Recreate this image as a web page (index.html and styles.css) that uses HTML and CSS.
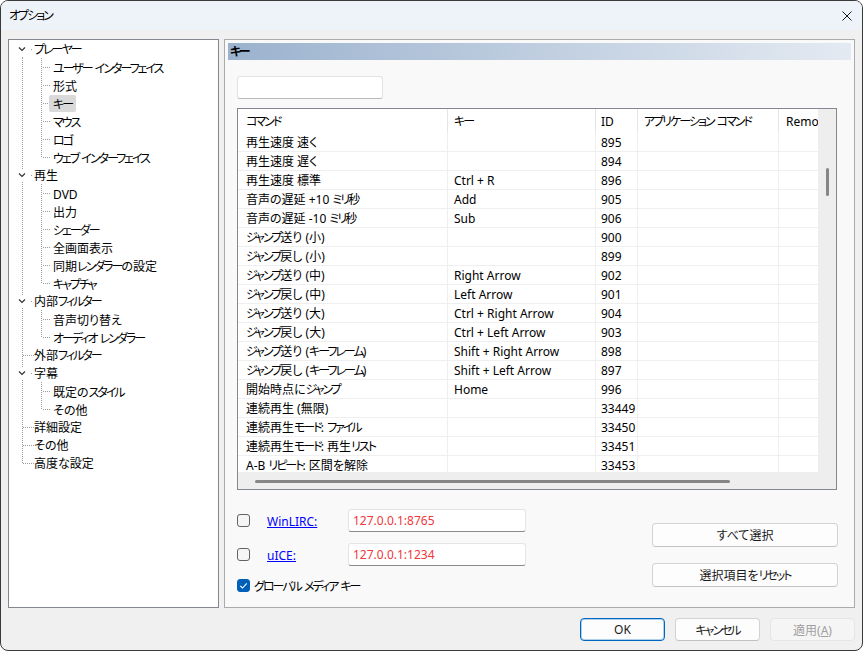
FILE: index.html
```html
<!DOCTYPE html>
<html lang="ja">
<head>
<meta charset="utf-8">
<title>オプション</title>
<link rel="stylesheet" href="styles.css">
</head>
<body>
<div class="window">
  <div class="titlebar">
    <span class="title"><span class="k">オプション</span></span>
    <span class="close"><svg width="10" height="10" viewBox="0 0 10 10"><path d="M0.5 0.5L9.5 9.5M9.5 0.5L0.5 9.5" stroke="#1b1b1b" stroke-width="1" fill="none"/></svg></span>
  </div>
  <div class="main">
    <div class="tree">
      <div class="row top first exp"><span class="exp-btn"><svg width="8" height="6" viewBox="0 0 8 6"><path d="M1 1.5L4 4.5L7 1.5" stroke="#333" stroke-width="1.2" fill="none"/></svg></span><span class="label"><span class="k">プレーヤー</span></span></div>
      <div class="row child"><span class="clabel"><span class="k">ユーザー</span> <span class="k">インターフェイス</span></span></div>
      <div class="row child"><span class="clabel">形式</span></div>
      <div class="row child"><span class="clabel selected"><span class="k">キー</span></span></div>
      <div class="row child"><span class="clabel"><span class="k">マウス</span></span></div>
      <div class="row child"><span class="clabel"><span class="k">ロゴ</span></span></div>
      <div class="row child last"><span class="clabel"><span class="k">ウェブ</span> <span class="k">インターフェイス</span></span></div>
      <div class="row top exp"><span class="exp-btn"><svg width="8" height="6" viewBox="0 0 8 6"><path d="M1 1.5L4 4.5L7 1.5" stroke="#333" stroke-width="1.2" fill="none"/></svg></span><span class="label">再生</span></div>
      <div class="row child"><span class="clabel">DVD</span></div>
      <div class="row child"><span class="clabel">出力</span></div>
      <div class="row child"><span class="clabel"><span class="k">シェーダー</span></span></div>
      <div class="row child"><span class="clabel">全画面表示</span></div>
      <div class="row child"><span class="clabel">同期<span class="k">レンダラー</span>の設定</span></div>
      <div class="row child last"><span class="clabel"><span class="k">キャプチャ</span></span></div>
      <div class="row top exp"><span class="exp-btn"><svg width="8" height="6" viewBox="0 0 8 6"><path d="M1 1.5L4 4.5L7 1.5" stroke="#333" stroke-width="1.2" fill="none"/></svg></span><span class="label">内部<span class="k">フィルター</span></span></div>
      <div class="row child"><span class="clabel">音声切り替え</span></div>
      <div class="row child last"><span class="clabel"><span class="k">オーディオ</span> <span class="k">レンダラー</span></span></div>
      <div class="row top"><span class="label plain">外部<span class="k">フィルター</span></span></div>
      <div class="row top exp"><span class="exp-btn"><svg width="8" height="6" viewBox="0 0 8 6"><path d="M1 1.5L4 4.5L7 1.5" stroke="#333" stroke-width="1.2" fill="none"/></svg></span><span class="label">字幕</span></div>
      <div class="row child"><span class="clabel">既定の<span class="k">スタイル</span></span></div>
      <div class="row child last"><span class="clabel">その他</span></div>
      <div class="row top"><span class="label plain">詳細設定</span></div>
      <div class="row top"><span class="label plain">その他</span></div>
      <div class="row top last"><span class="label plain">高度な設定</span></div>
    </div>
    <div class="page">
      <div class="page-header"><span class="k">キー</span></div>
      <div class="page-body">
        <div class="search"></div>
        <div class="list">
          <div class="viewport">
            <div class="thead">
              <div class="c c1"><span class="k">コマンド</span></div><div class="c"><span class="k">キー</span></div><div class="c c3">ID</div><div class="c"><span class="k">アプリケーション</span> <span class="k">コマンド</span></div><div class="c c5">Remote</div>
            </div>
            <div class="trow"><div class="c c1">再生速度 速く</div><div class="c"></div><div class="c c3">895</div><div class="c"></div><div class="c c5"></div></div>
            <div class="trow"><div class="c c1">再生速度 遅く</div><div class="c"></div><div class="c c3">894</div><div class="c"></div><div class="c c5"></div></div>
            <div class="trow"><div class="c c1">再生速度 標準</div><div class="c">Ctrl + R</div><div class="c c3">896</div><div class="c"></div><div class="c c5"></div></div>
            <div class="trow"><div class="c c1">音声の遅延 +10 <span class="k">ミリ</span>秒</div><div class="c">Add</div><div class="c c3">905</div><div class="c"></div><div class="c c5"></div></div>
            <div class="trow"><div class="c c1">音声の遅延 -10 <span class="k">ミリ</span>秒</div><div class="c">Sub</div><div class="c c3">906</div><div class="c"></div><div class="c c5"></div></div>
            <div class="trow"><div class="c c1"><span class="k">ジャンプ</span>送り (小)</div><div class="c"></div><div class="c c3">900</div><div class="c"></div><div class="c c5"></div></div>
            <div class="trow"><div class="c c1"><span class="k">ジャンプ</span>戻し (小)</div><div class="c"></div><div class="c c3">899</div><div class="c"></div><div class="c c5"></div></div>
            <div class="trow"><div class="c c1"><span class="k">ジャンプ</span>送り (中)</div><div class="c">Right Arrow</div><div class="c c3">902</div><div class="c"></div><div class="c c5"></div></div>
            <div class="trow"><div class="c c1"><span class="k">ジャンプ</span>戻し (中)</div><div class="c">Left Arrow</div><div class="c c3">901</div><div class="c"></div><div class="c c5"></div></div>
            <div class="trow"><div class="c c1"><span class="k">ジャンプ</span>送り (大)</div><div class="c">Ctrl + Right Arrow</div><div class="c c3">904</div><div class="c"></div><div class="c c5"></div></div>
            <div class="trow"><div class="c c1"><span class="k">ジャンプ</span>戻し (大)</div><div class="c">Ctrl + Left Arrow</div><div class="c c3">903</div><div class="c"></div><div class="c c5"></div></div>
            <div class="trow"><div class="c c1"><span class="k">ジャンプ</span>送り (<span class="k">キーフレーム</span>)</div><div class="c">Shift + Right Arrow</div><div class="c c3">898</div><div class="c"></div><div class="c c5"></div></div>
            <div class="trow"><div class="c c1"><span class="k">ジャンプ</span>戻し (<span class="k">キーフレーム</span>)</div><div class="c">Shift + Left Arrow</div><div class="c c3">897</div><div class="c"></div><div class="c c5"></div></div>
            <div class="trow"><div class="c c1">開始時点に<span class="k">ジャンプ</span></div><div class="c">Home</div><div class="c c3">996</div><div class="c"></div><div class="c c5"></div></div>
            <div class="trow"><div class="c c1">連続再生 (無限)</div><div class="c"></div><div class="c c3">33449</div><div class="c"></div><div class="c c5"></div></div>
            <div class="trow"><div class="c c1">連続再生<span class="k">モード</span>: <span class="k">ファイル</span></div><div class="c"></div><div class="c c3">33450</div><div class="c"></div><div class="c c5"></div></div>
            <div class="trow"><div class="c c1">連続再生<span class="k">モード</span>: 再生<span class="k">リスト</span></div><div class="c"></div><div class="c c3">33451</div><div class="c"></div><div class="c c5"></div></div>
            <div class="trow"><div class="c c1">A-B <span class="k">リピート</span>: 区間を解除</div><div class="c"></div><div class="c c3">33453</div><div class="c"></div><div class="c c5"></div></div>
          </div>
          <div class="vscroll"><div class="vthumb"></div></div>
          <div class="hscroll"><div class="hthumb"></div></div>
          <div class="corner"></div>
        </div>
        <div class="bottom">
          <div class="opts">
            <div class="opt-row">
              <span class="cb"></span>
              <span class="link-cell"><a class="link" href="#">WinLIRC:</a></span>
              <div class="addr">127.0.0.1:8765</div>
            </div>
            <div class="opt-row second">
              <span class="cb"></span>
              <span class="link-cell"><a class="link" href="#">uICE:</a></span>
              <div class="addr">127.0.0.1:1234</div>
            </div>
            <div class="opt-row third">
              <span class="cb checked"><svg width="13" height="13" viewBox="0 0 13 13"><path d="M3.2 6.8L5.5 9L9.8 4.3" stroke="#fff" stroke-width="1.1" fill="none"/></svg></span>
              <span class="cb-label"><span class="k">グローバル</span> <span class="k">メディア</span> <span class="k">キー</span></span>
            </div>
          </div>
          <div class="side-btns">
            <button class="btn wide">すべて選択</button>
            <button class="btn wide">選択項目を<span class="k">リセット</span></button>
          </div>
        </div>
      </div>
    </div>
  </div>
  <div class="footer">
    <button class="btn dlg default">OK</button>
    <button class="btn dlg"><span class="k">キャンセル</span></button>
    <button class="btn dlg disabled">適用(<u>A</u>)</button>
  </div>
</div>
</body>
</html>
```

FILE: styles.css
```css
* { box-sizing: border-box; }
html, body { margin: 0; padding: 0; background: #ffffff; }
body {
  font-family: "Noto Sans", "Noto Sans CJK JP", sans-serif;
  font-size: 12px;
  color: #000;
  font-feature-settings: "palt";
  --v: repeating-linear-gradient(to bottom, #9a9a9a 0 1px, transparent 1px 2px);
  --h: repeating-linear-gradient(to right, #9a9a9a 0 1px, transparent 1px 2px);
}
.k { letter-spacing: -2px; }
.window {
  width: 863px;
  height: 651px;
  border: 1px solid #3a3a3a;
  border-radius: 8px;
  background: #f0f0f0;
  display: flex;
  flex-direction: column;
  overflow: hidden;
}
.titlebar {
  height: 29px;
  flex: none;
  background: #eef2f9;
  display: flex;
  align-items: center;
  padding-left: 8px;
}
.title { line-height: 16px; }
.close { margin-left: auto; margin-right: 10px; width: 10px; height: 10px; display: flex; }
.main {
  flex: 1;
  display: flex;
  gap: 5px;
  padding: 9px 7px 0 7px;
  min-height: 0;
}
/* tree */
.tree {
  width: 211px;
  flex: none;
  background: #fff;
  border: 1px solid #828790;
}
.row {
  height: 18px;
  display: flex;
  align-items: center;
  background-repeat: no-repeat;
  white-space: nowrap;
}
.row.top {
  background-image: var(--v), var(--h);
  background-position: 13px 0, 14px 9px;
  background-size: 1px 18px, 11px 1px;
}
.row.top.exp { background-position: 13px 0, 22px 9px; background-size: 1px 18px, 1px 1px; }
.row.top.first { background-position: 13px 9px, 22px 9px; background-size: 1px 9px, 1px 1px; }
.row.top.last { background-size: 1px 10px, 11px 1px; }
.row.child {
  background-image: var(--v), var(--v), var(--h);
  background-position: 13px 0, 32px 0, 34px 9px;
  background-size: 1px 18px, 1px 18px, 7px 1px;
}
.row.child.last { background-size: 1px 18px, 1px 10px, 7px 1px; }
.exp-btn {
  width: 8px;
  height: 13px;
  margin-left: 9px;
  background: #fff;
  display: flex;
  align-items: center;
}
.label { margin-left: 8px; height: 18px; padding-top: 2px; line-height: 16px; }
.label.plain { margin-left: 25px; }
.clabel {
  margin-left: 40px;
  padding: 2px 4px 0;
  height: 17px;
  line-height: 15px;
  border-radius: 2px;
}
.clabel.selected { background: #d9d9d9; }
/* page */
.page {
  width: 631px;
  flex: none;
  border: 1px solid #ababab;
  background: #f9f9f9;
  padding: 3px;
}
.page-header {
  height: 17px;
  line-height: 17px;
  padding-left: 2px;
  font-weight: bold;
  background: linear-gradient(to right, #9bb2ce, #e4eaf2);
}
.page-body { padding: 16px 0 0 9px; }
.search {
  width: 146px;
  height: 23px;
  background: #fff;
  border: 1px solid #e3e3e3;
  border-bottom-color: #b8b8b8;
  border-radius: 3px;
  margin-bottom: 9px;
}
.list {
  width: 600px;
  height: 382px;
  border: 1px solid #828790;
  background: #fff;
  display: grid;
  grid-template-columns: 580px 18px;
  grid-template-rows: 363px 17px;
}
.viewport { overflow: hidden; }
.thead, .trow {
  display: grid;
  grid-template-columns: 210px 148px 42px 141px 140px;
  width: 681px;
}
.thead { height: 24px; }
.thead .c { padding-top: 2px; line-height: 22px; border-right: 1px solid #e5e5e5; }
.trow { height: 19px; border-bottom: 1px solid #efefef; }
.trow .c { padding-top: 2px; line-height: 16px; border-right: 1px solid #efefef; }
.c { padding-left: 6px; white-space: nowrap; overflow: hidden; }
.c1 { padding-left: 8px; }
.c3 { padding-left: 5px; }
.c5 { padding-left: 7px; border-right: none !important; }
.vscroll { background: #eeeeee; }
.vthumb { width: 3px; height: 28px; margin: 59px auto 0; background: #868686; border-radius: 2px; }
.hscroll { background: #eeeeee; padding: 8px 0 0 17px; }
.hthumb { width: 475px; height: 3px; background: #868686; border-radius: 2px; }
.corner { background: #eeeeee; }
/* bottom options */
.bottom {
  width: 601px;
  display: flex;
  justify-content: space-between;
}
.opts { margin-top: 19px; }
.opt-row { display: flex; align-items: center; height: 23px; }
.opt-row.second { margin-top: 11px; }
.opt-row.third { margin-top: 10px; height: 18px; }
.cb {
  width: 13px;
  height: 13px;
  border: 1px solid #636363;
  border-radius: 3px;
  background: #f5f5f5;
  flex: none;
  display: flex;
}
.cb.checked { background: #005fb8; border-color: #005fb8; }
.cb.checked svg { margin: -1px; }
.link-cell { width: 98px; padding-left: 17px; padding-top: 1px; }
.link { color: #0000ff; text-decoration: underline; }
.cb-label { margin-left: 4px; padding-top: 1px; }
.addr {
  width: 178px;
  height: 23px;
  padding-top: 1px;
  line-height: 20px;
  padding-left: 4px;
  background: #fff;
  border: 1px solid #e5e5e5;
  border-bottom-color: #8a8a8a;
  border-radius: 3px;
  color: #f0373a;
}
.side-btns { margin-top: 33px; display: flex; flex-direction: column; gap: 16px; }
.btn {
  font: inherit;
  color: #1b1b1b;
  background: #fdfdfd;
  border: 1px solid #d3d3d3;
  border-bottom-color: #c2c2c2;
  border-radius: 4px;
  padding: 0;
}
.btn.wide { width: 186px; height: 24px; }
.footer {
  flex: none;
  display: flex;
  justify-content: flex-end;
  gap: 10px;
  padding: 10px 7px 9px 0;
}
.btn.dlg { width: 85px; height: 23px; }
.btn.default { border: 1px solid #0067c0; box-shadow: inset 0 0 0 1px rgba(0, 103, 192, 0.3); }
.btn.disabled { color: #a0a0a0; background: #f5f5f5; border-color: #e5e5e5; }
```
